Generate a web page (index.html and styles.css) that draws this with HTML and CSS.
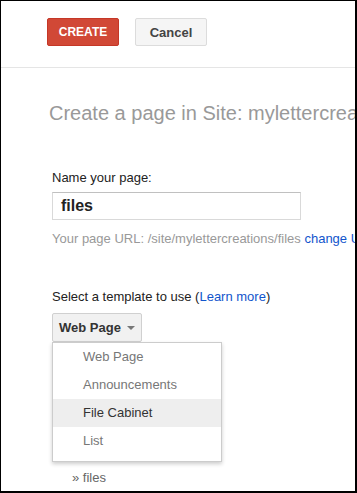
FILE: index.html
```html
<!DOCTYPE html>
<html>
<head>
    <title>Create a page</title>
    <link rel="stylesheet" href="styles.css">
</head>
<body>
<div class="frame">
    <div class="toolbar">
        <button class="btn btn-create">CREATE</button>
        <button class="btn btn-cancel">Cancel</button>
    </div>

    <div class="content">
        <h1 class="title">Create a page in Site: mylettercreations</h1>

        <label class="label">Name your page:</label>
        <div class="name-input">files</div>
        <div class="url">Your page URL: /site/mylettercreations/files <a class="link">change URL</a></div>

        <div class="label template-label">Select a template to use (<a class="link">Learn more</a>)</div>
        <button class="dropdown">Web Page <span class="caret"></span></button>

        <ul class="menu">
            <li>Web Page</li>
            <li>Announcements</li>
            <li class="hover">File Cabinet</li>
            <li>List</li>
        </ul>

        <div class="location">&raquo; files</div>
    </div>
</div>
</body>
</html>
```

FILE: styles.css
```css
html, body {
    margin: 0;
    padding: 0;
}
body {
    font-family: "Liberation Sans", Arial, sans-serif;
    background: #fff;
}
.frame {
    width: 357px;
    height: 493px;
    box-sizing: border-box;
    border: 1px solid #000;
    border-right-width: 2px;
    border-bottom-width: 2px;
    overflow: hidden;
    position: relative;
}
.toolbar {
    display: flex;
    gap: 16px;
    height: 67px;
    box-sizing: border-box;
    padding: 17px 0 0 46px;
    border-bottom: 1px solid #e5e5e5;
}
.btn {
    width: 72px;
    height: 28px;
    border-radius: 2px;
    font-family: inherit;
    font-size: 12px;
    font-weight: bold;
    padding: 0;
}
.btn-create {
    background: #d14836;
    border: 1px solid #c53727;
    color: #fff;
}
.btn-cancel {
    background: #f5f5f5;
    border: 1px solid #dcdcdc;
    color: #444;
    font-size: 13px;
}
.content {
    padding-left: 51px;
    white-space: nowrap;
}
.title {
    margin: 0;
    padding-top: 33px;
    margin-left: -3px;
    font-size: 20px;
    font-weight: normal;
    color: #999;
    line-height: 24px;
}
.label {
    display: block;
    margin-top: 45px;
    font-size: 13px;
    color: #222;
    line-height: 16px;
}
.name-input {
    width: 249px;
    height: 28px;
    margin-top: 6px;
    box-sizing: border-box;
    border: 1px solid #d9d9d9;
    border-top-color: #c0c0c0;
    padding: 0 8px;
    font-size: 16px;
    font-weight: bold;
    line-height: 26px;
    color: #222;
}
.url {
    margin-top: 11px;
    font-size: 13px;
    color: #999;
    line-height: 16px;
}
.link {
    color: #15c;
    text-decoration: none;
}
.template-label {
    margin-top: 42px;
}
.dropdown {
    display: flex;
    align-items: center;
    gap: 6px;
    width: 90px;
    height: 29px;
    margin-top: 8px;
    padding: 0 0 0 6px;
    background: #f1f1f1;
    border: 1px solid #d0d0d0;
    border-radius: 2px;
    font-family: inherit;
    font-size: 13px;
    font-weight: bold;
    color: #333;
}
.caret {
    width: 0;
    height: 0;
    border-left: 4px solid transparent;
    border-right: 4px solid transparent;
    border-top: 4px solid #777;
}
.menu {
    list-style: none;
    margin: 0;
    padding: 0 0 6px;
    width: 170px;
    box-sizing: border-box;
    border: 1px solid #ccc;
    box-shadow: 0 2px 4px rgba(0, 0, 0, 0.2);
    background: #fff;
}
.menu li {
    height: 28px;
    line-height: 28px;
    padding-left: 30px;
    font-size: 13px;
    color: #777;
}
.menu li.hover {
    background: #eee;
    color: #333;
}
.location {
    margin-top: 8px;
    padding-left: 20px;
    font-size: 13px;
    color: #666;
}
```
